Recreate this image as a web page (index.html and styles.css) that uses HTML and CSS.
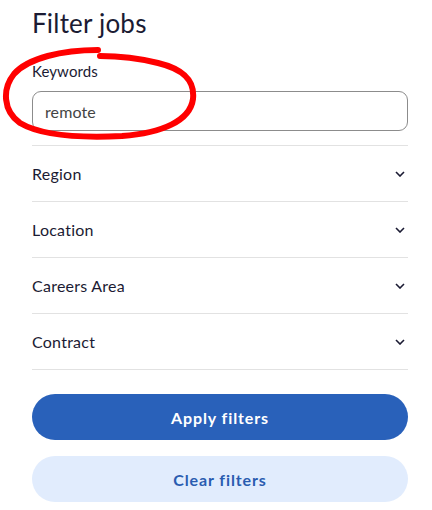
FILE: index.html
```html
<!DOCTYPE html>
<html lang="en">
<head>
<meta charset="utf-8">
<link rel="stylesheet" href="styles.css">
</head>
<body>
<div class="panel">
  <h1 class="title">Filter jobs</h1>
  <div class="keywords">
    <label class="label" for="kw">Keywords</label>
    <input class="input" id="kw" type="text" value="remote">
    <svg class="scribble" width="200" height="100" viewBox="0 40 200 100" aria-hidden="true">
      <path d="M98,50 C62,50 28,58 14,74 C2,89 3,111 20,123 C42,136 82,138 122,136 C162,133 190,121 193,99 C195,80 183,69 158,63 C138,58 118,56 100,56" fill="none" stroke="#ff0000" stroke-width="6" stroke-linecap="round" stroke-linejoin="round"/>
    </svg>
  </div>
  <div class="rows">
    <div class="row"><span>Region</span><svg class="chev" width="10" height="6" viewBox="0 0 10 6"><path d="M1,1 L5,5 L9,1" fill="none" stroke="#1b1b33" stroke-width="1.6"/></svg></div>
    <div class="row"><span>Location</span><svg class="chev" width="10" height="6" viewBox="0 0 10 6"><path d="M1,1 L5,5 L9,1" fill="none" stroke="#1b1b33" stroke-width="1.6"/></svg></div>
    <div class="row"><span>Careers Area</span><svg class="chev" width="10" height="6" viewBox="0 0 10 6"><path d="M1,1 L5,5 L9,1" fill="none" stroke="#1b1b33" stroke-width="1.6"/></svg></div>
    <div class="row"><span>Contract</span><svg class="chev" width="10" height="6" viewBox="0 0 10 6"><path d="M1,1 L5,5 L9,1" fill="none" stroke="#1b1b33" stroke-width="1.6"/></svg></div>
  </div>
  <div class="actions">
    <button class="btn btn-primary">Apply filters</button>
    <button class="btn btn-secondary">Clear filters</button>
  </div>
</div>
</body>
</html>
```
FILE: styles.css
```css
* { box-sizing: border-box; }
html, body { margin: 0; padding: 0; background: #ffffff; }
body { font-family: Lato, "Noto Sans", sans-serif; color: #1b1b33; }
.panel { width: 432px; padding: 6px 24px 0 32px; }
.title { margin: 0; font-size: 26px; font-weight: 400; line-height: 34px; letter-spacing: 0.2px; }
.keywords { position: relative; display: flex; flex-direction: column; padding-top: 22px; padding-bottom: 14px; }
.label { font-size: 15px; line-height: 18px; margin-bottom: 11px; letter-spacing: 0.1px; }
.input { width: 376px; height: 40px; border: 1px solid #8c8c8c; border-radius: 9px; padding: 0 12px; font-family: Lato, "Noto Sans", sans-serif; font-size: 16px; color: #444; outline: none; letter-spacing: 0.1px; }
.scribble { position: absolute; left: -32px; top: 0; pointer-events: none; }
.rows { border-top: 1px solid #e2e2e2; width: 376px; }
.row { height: 56px; border-bottom: 1px solid #e2e2e2; display: flex; align-items: center; justify-content: space-between; font-size: 16px; letter-spacing: 0.25px; padding-right: 3px; }
.chev { display: block; }
.actions { display: flex; flex-direction: column; gap: 16px; padding-top: 24px; width: 376px; }
.btn { height: 46px; border: none; border-radius: 23px; font-family: Lato, "Noto Sans", sans-serif; font-size: 16px; font-weight: 700; letter-spacing: 0.9px; cursor: pointer; }
.btn-primary { background: #2961ba; color: #ffffff; }
.btn-secondary { background: #e1ecfd; color: #2a5cb0; }
```
